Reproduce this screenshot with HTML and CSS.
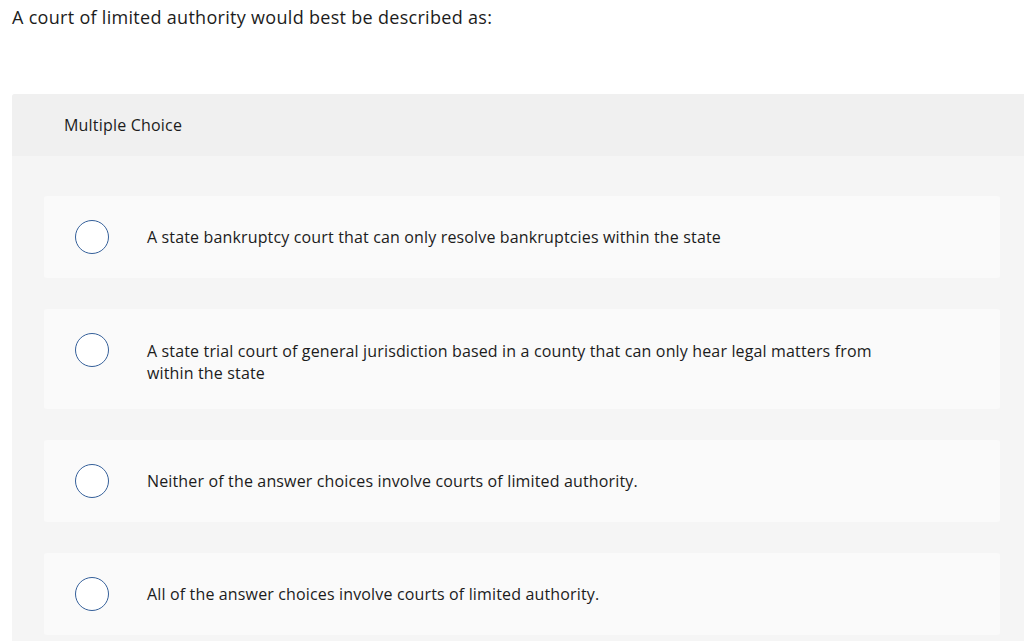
FILE: index.html
```html
<!DOCTYPE html>
<html>
<head>
<meta charset="utf-8">
<link rel="stylesheet" href="styles.css">
</head>
<body>
<div class="page">
  <p class="prompt">A court of limited authority would best be described as:</p>
  <div class="panel">
    <div class="panel-head">Multiple Choice</div>
    <div class="panel-body">
      <div class="option"><span class="radio"></span><span class="label">A state bankruptcy court that can only resolve bankruptcies within the state</span></div>
      <div class="option"><span class="radio"></span><span class="label">A state trial court of general jurisdiction based in a county that can only hear legal matters from within the state</span></div>
      <div class="option"><span class="radio"></span><span class="label">Neither of the answer choices involve courts of limited authority.</span></div>
      <div class="option"><span class="radio"></span><span class="label">All of the answer choices involve courts of limited authority.</span></div>
    </div>
  </div>
</div>
</body>
</html>
```

FILE: styles.css
```css
html, body {
  margin: 0;
  padding: 0;
  background: #ffffff;
}
body {
  font-family: "Open Sans", "Liberation Sans", sans-serif;
  color: #1c1c1c;
  overflow: hidden;
}
.page {
  padding-left: 12px;
}
.prompt {
  margin: 0;
  padding-top: 5px;
  font-size: 18px;
  letter-spacing: 0.3px;
  line-height: 24px;
  height: 89px;
}
.panel {
  background: #f5f5f5;
  border-top-left-radius: 3px;
}
.panel-head {
  background: #f0f0f0;
  height: 62px;
  padding-left: 52px;
  display: flex;
  align-items: center;
  font-size: 16px;
  letter-spacing: 0.2px;
  border-top-left-radius: 3px;
}
.panel-body {
  padding: 40px 24px 6px 32px;
  display: flex;
  flex-direction: column;
  gap: 31px;
}
.option {
  box-sizing: border-box;
  min-height: 82px;
  background: #fafafa;
  border-radius: 3px;
  padding: 24px 30px 24px 31px;
  display: flex;
  align-items: flex-start;
  gap: 38px;
}
.radio {
  box-sizing: border-box;
  flex: none;
  width: 34px;
  height: 34px;
  border: 1.5px solid #35609a;
  border-radius: 50%;
  background: #ffffff;
}
.label {
  margin-top: 6px;
  font-size: 16px;
  letter-spacing: 0.15px;
  line-height: 22px;
  max-width: 745px;
}
.option:nth-child(2) .label {
  margin-top: 7px;
  padding-bottom: 1px;
}
```
